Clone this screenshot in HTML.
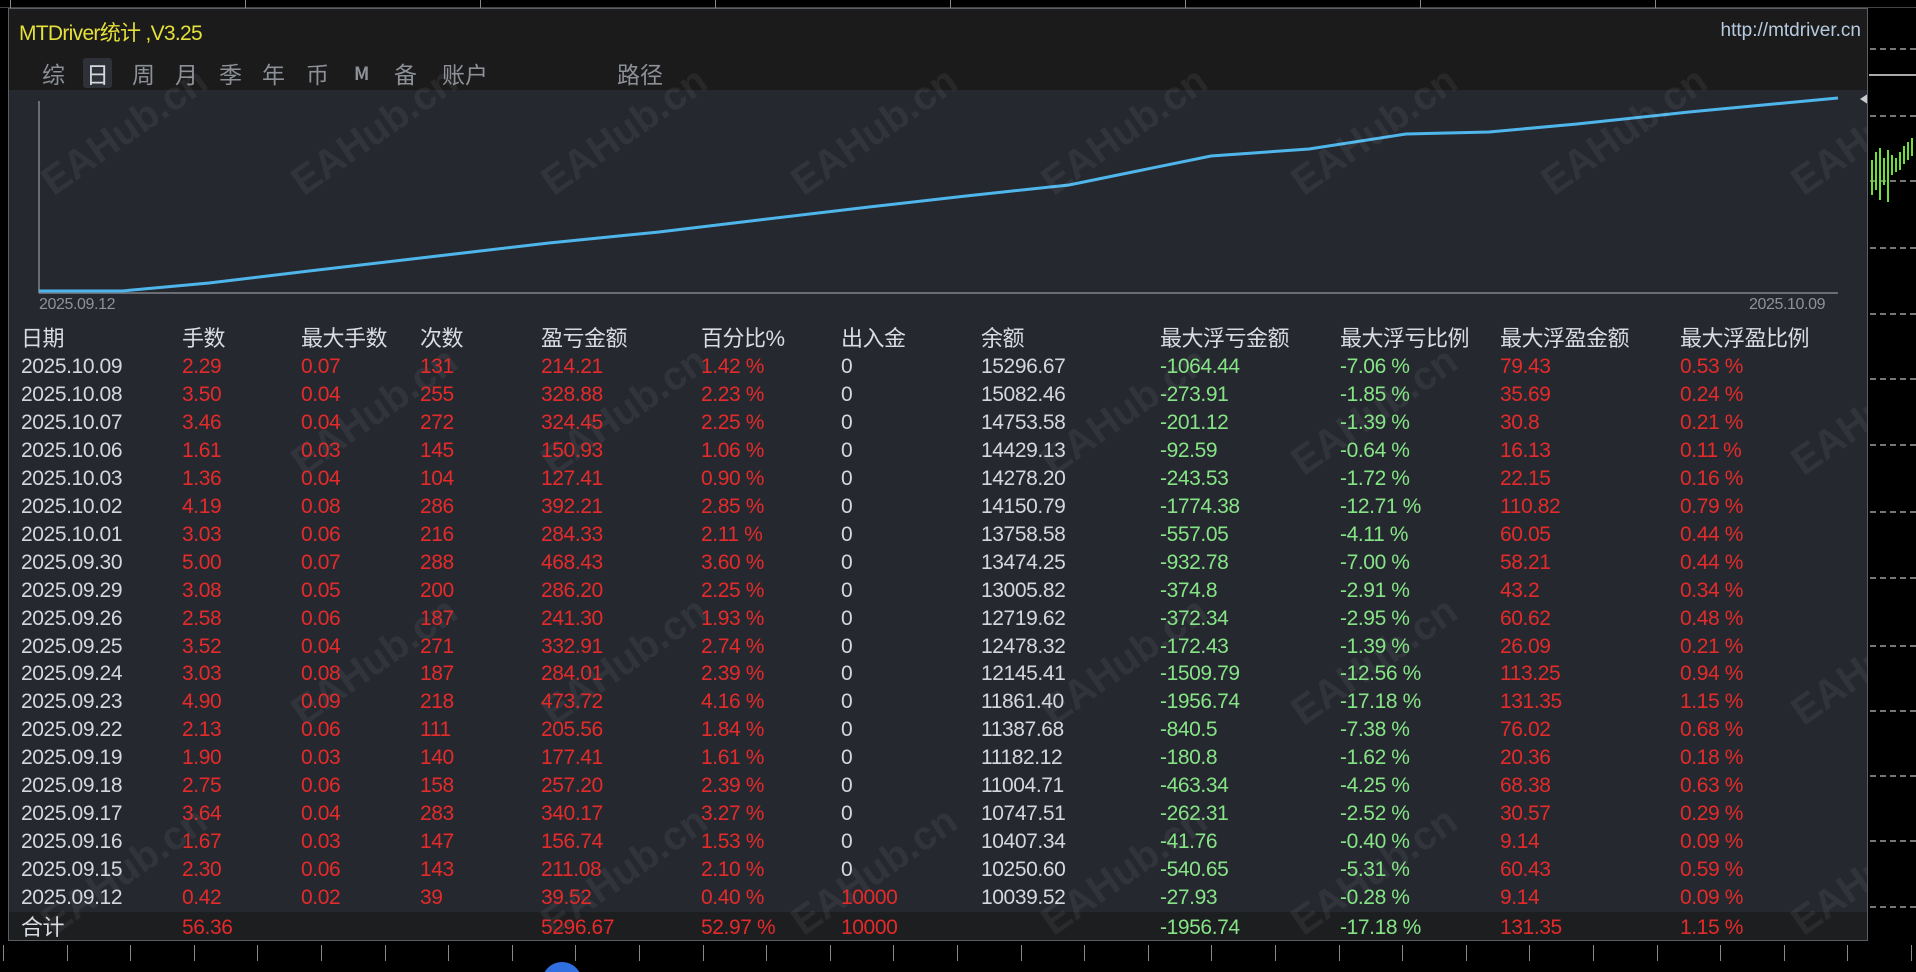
<!DOCTYPE html>
<html><head><meta charset="utf-8"><style>
*{margin:0;padding:0;box-sizing:border-box}
html{width:1916px;height:972px;overflow:hidden}
body{width:1916px;height:972px;background:#000;position:relative;overflow:hidden;font-family:"Liberation Sans","Noto Sans CJK SC",sans-serif}
.panel{position:absolute;left:8px;top:8px;width:1860px;height:933px;background:#25292f;border:1px solid #5a5f66;overflow:hidden}
.top{position:absolute;left:0;top:0;width:100%;height:81px;background:#1b1b1c}
.title{position:absolute;left:10px;top:8px;color:#e6e03a;font-size:21px;letter-spacing:-0.7px}
.url{position:absolute;right:6px;top:11px;color:#b7cbe0;font-size:19px}
.tab{position:absolute;top:49px;color:#8c9097;font-size:23px;font-family:"Noto Sans CJK SC",sans-serif;line-height:30px}
.tab.sel{background:#2e3238;color:#d5d8dc;padding:0 3px;border-radius:3px}
.c{position:absolute;font-size:21px;line-height:28px;white-space:nowrap;letter-spacing:-0.4px}
.h{color:#d9dde3;font-size:22px;font-family:"Liberation Sans","Noto Sans CJK SC",sans-serif;letter-spacing:-0.5px}
.w{color:#d4d8de}.r{color:#e42a2a}.g{color:#86e486}
.tot{position:absolute;left:0;top:903px;width:100%;height:30px;background:#1d1e20}
.wm{position:absolute;color:rgba(255,255,255,0.06);font-size:40px;font-weight:bold;transform:rotate(-35deg);white-space:nowrap}
.dash{position:absolute;left:1870px;width:46px;border-top:2px dashed #777}
.tick{position:absolute;top:945px;width:1px;height:16px;background:#888}
</style></head><body>
<div class="panel">
<div class="top"></div>
<div class="title">MTDriver统计 ,V3.25</div>
<div class="url">http://mtdriver.cn</div>
<div class="tab" style="left:33px">综</div>
<div class="tab sel" style="left:74px">日</div>
<div class="tab" style="left:123px">周</div>
<div class="tab" style="left:166px">月</div>
<div class="tab" style="left:210px">季</div>
<div class="tab" style="left:253px">年</div>
<div class="tab" style="left:297px">币</div>
<div class="tab" style="left:345px;font-size:18px;font-weight:bold">M</div>
<div class="tab" style="left:385px">备</div>
<div class="tab" style="left:433px">账户</div>
<div class="tab" style="left:608px">路径</div>
<svg style="position:absolute;left:0;top:0" width="1860" height="300">
<line x1="30" y1="92" x2="30" y2="284" stroke="#6a6e74" stroke-width="2"/>
<line x1="30" y1="284" x2="1829" y2="284" stroke="#6a6e74" stroke-width="2"/>
<polyline fill="none" stroke="#4fb6ec" stroke-width="3" points="30,282 113,282 200,274 300,262 420,248 540,234 650,223 750,211 860,198 957,187 1060,176 1104,167 1202,147 1300,140 1397,125 1480,123 1568,115 1680,103 1829,89"/>
<polygon points="1860,84 1851,90 1860,96" fill="#c8ccd0"/>
</svg>
<div class="c" style="left:30px;top:282px;color:#8e9298;font-size:16px">2025.09.12</div>
<div class="c" style="left:1740px;top:282px;color:#8e9298;font-size:16px">2025.10.09</div>
<div class="tot"></div>
<div class="wm" style="left:20px;top:100px">EAHub.cn</div><div class="wm" style="left:270px;top:100px">EAHub.cn</div><div class="wm" style="left:520px;top:100px">EAHub.cn</div><div class="wm" style="left:770px;top:100px">EAHub.cn</div><div class="wm" style="left:1020px;top:100px">EAHub.cn</div><div class="wm" style="left:1270px;top:100px">EAHub.cn</div><div class="wm" style="left:1520px;top:100px">EAHub.cn</div><div class="wm" style="left:1770px;top:100px">EAHub.cn</div>
<div class="wm" style="left:270px;top:380px">EAHub.cn</div><div class="wm" style="left:520px;top:380px">EAHub.cn</div><div class="wm" style="left:1020px;top:380px">EAHub.cn</div><div class="wm" style="left:1270px;top:380px">EAHub.cn</div><div class="wm" style="left:1770px;top:380px">EAHub.cn</div>
<div class="wm" style="left:270px;top:630px">EAHub.cn</div><div class="wm" style="left:520px;top:630px">EAHub.cn</div><div class="wm" style="left:1020px;top:630px">EAHub.cn</div><div class="wm" style="left:1270px;top:630px">EAHub.cn</div><div class="wm" style="left:1770px;top:630px">EAHub.cn</div>
<div class="wm" style="left:20px;top:840px">EAHub.cn</div><div class="wm" style="left:520px;top:840px">EAHub.cn</div><div class="wm" style="left:770px;top:840px">EAHub.cn</div><div class="wm" style="left:1020px;top:840px">EAHub.cn</div><div class="wm" style="left:1270px;top:840px">EAHub.cn</div><div class="wm" style="left:1770px;top:840px">EAHub.cn</div>
<div id="tbl"></div>
</div>
<div class="dash" style="top:48px"></div><div style="position:absolute;left:1869px;top:74px;width:47px;height:2px;background:#aaa"></div>
<div class="dash" style="top:115px"></div><div class="dash" style="top:180px"></div><div class="dash" style="top:247px"></div><div class="dash" style="top:313px"></div><div class="dash" style="top:378px"></div><div class="dash" style="top:444px"></div><div class="dash" style="top:511px"></div><div class="dash" style="top:577px"></div><div class="dash" style="top:645px"></div><div class="dash" style="top:710px"></div><div class="dash" style="top:775px"></div><div class="dash" style="top:840px"></div><div class="dash" style="top:906px"></div>
<svg style="position:absolute;left:1868px;top:130px" width="48" height="80"><g stroke="#6fe03a" stroke-width="2">
<line x1="4" y1="30" x2="4" y2="65"/><line x1="8" y1="22" x2="8" y2="60"/><line x1="12" y1="18" x2="12" y2="70"/><line x1="16" y1="28" x2="16" y2="55"/><line x1="20" y1="20" x2="20" y2="72"/><line x1="24" y1="25" x2="24" y2="45"/><line x1="28" y1="28" x2="28" y2="42"/><line x1="32" y1="22" x2="32" y2="40"/><line x1="36" y1="16" x2="36" y2="34"/><line x1="40" y1="12" x2="40" y2="30"/><line x1="44" y1="8" x2="44" y2="26"/></g></svg>
<div style="position:absolute;left:0;top:0;width:1916px;height:8px;border-bottom:1px solid #444"></div>
<div style="position:absolute;left:540px;top:962px;width:44px;height:10px;overflow:hidden"><div style="width:40px;height:40px;margin-left:2px;border-radius:50%;background:#2f6fe0"></div></div>
<div id="ticks"></div>
<script>
var cols=[12,173,292,411,532,692,832,972,1151,1331,1491,1671];
var hd=["日期","手数","最大手数","次数","盈亏金额","百分比%","出入金","余额","最大浮亏金额","最大浮亏比例","最大浮盈金额","最大浮盈比例"];
var rows=[
["2025.10.09","2.29","0.07","131","214.21","1.42 %","0","15296.67","-1064.44","-7.06 %","79.43","0.53 %"],
["2025.10.08","3.50","0.04","255","328.88","2.23 %","0","15082.46","-273.91","-1.85 %","35.69","0.24 %"],
["2025.10.07","3.46","0.04","272","324.45","2.25 %","0","14753.58","-201.12","-1.39 %","30.8","0.21 %"],
["2025.10.06","1.61","0.03","145","150.93","1.06 %","0","14429.13","-92.59","-0.64 %","16.13","0.11 %"],
["2025.10.03","1.36","0.04","104","127.41","0.90 %","0","14278.20","-243.53","-1.72 %","22.15","0.16 %"],
["2025.10.02","4.19","0.08","286","392.21","2.85 %","0","14150.79","-1774.38","-12.71 %","110.82","0.79 %"],
["2025.10.01","3.03","0.06","216","284.33","2.11 %","0","13758.58","-557.05","-4.11 %","60.05","0.44 %"],
["2025.09.30","5.00","0.07","288","468.43","3.60 %","0","13474.25","-932.78","-7.00 %","58.21","0.44 %"],
["2025.09.29","3.08","0.05","200","286.20","2.25 %","0","13005.82","-374.8","-2.91 %","43.2","0.34 %"],
["2025.09.26","2.58","0.06","187","241.30","1.93 %","0","12719.62","-372.34","-2.95 %","60.62","0.48 %"],
["2025.09.25","3.52","0.04","271","332.91","2.74 %","0","12478.32","-172.43","-1.39 %","26.09","0.21 %"],
["2025.09.24","3.03","0.08","187","284.01","2.39 %","0","12145.41","-1509.79","-12.56 %","113.25","0.94 %"],
["2025.09.23","4.90","0.09","218","473.72","4.16 %","0","11861.40","-1956.74","-17.18 %","131.35","1.15 %"],
["2025.09.22","2.13","0.06","111","205.56","1.84 %","0","11387.68","-840.5","-7.38 %","76.02","0.68 %"],
["2025.09.19","1.90","0.03","140","177.41","1.61 %","0","11182.12","-180.8","-1.62 %","20.36","0.18 %"],
["2025.09.18","2.75","0.06","158","257.20","2.39 %","0","11004.71","-463.34","-4.25 %","68.38","0.63 %"],
["2025.09.17","3.64","0.04","283","340.17","3.27 %","0","10747.51","-262.31","-2.52 %","30.57","0.29 %"],
["2025.09.16","1.67","0.03","147","156.74","1.53 %","0","10407.34","-41.76","-0.40 %","9.14","0.09 %"],
["2025.09.15","2.30","0.06","143","211.08","2.10 %","0","10250.60","-540.65","-5.31 %","60.43","0.59 %"],
["2025.09.12","0.42","0.02","39","39.52","0.40 %","10000","10039.52","-27.93","-0.28 %","9.14","0.09 %"]];
var cls=["w","r","r","r","r","r","w","w","g","g","r","r"];
var h="";
hd.forEach(function(t,i){h+='<div class="c h" style="left:'+cols[i]+'px;top:316px">'+t+'</div>';});
rows.forEach(function(r,j){var y=344+j*27.95;r.forEach(function(t,i){var c=cls[i];if(i==6&&t!="0")c="r";h+='<div class="c '+c+'" style="left:'+cols[i]+'px;top:'+y+'px">'+t+'</div>';});});
var tot=["合计","56.36","","","5296.67","52.97 %","10000","","-1956.74","-17.18 %","131.35","1.15 %"];
var tc=["h","r","r","r","r","r","r","w","g","g","r","r"];
tot.forEach(function(t,i){if(t)h+='<div class="c '+tc[i]+'" style="left:'+cols[i]+'px;top:905px">'+t+'</div>';});
document.getElementById("tbl").innerHTML=h;
var k="";for(var x=3;x<1916;x+=63.6){k+='<div class="tick" style="left:'+Math.round(x)+'px"></div>';}
for(var x=10;x<1860;x+=235){k+='<div class="tick" style="left:'+Math.round(x)+'px;top:0;height:8px"></div>';}
document.getElementById("ticks").innerHTML=k;
</script>
</body></html>
